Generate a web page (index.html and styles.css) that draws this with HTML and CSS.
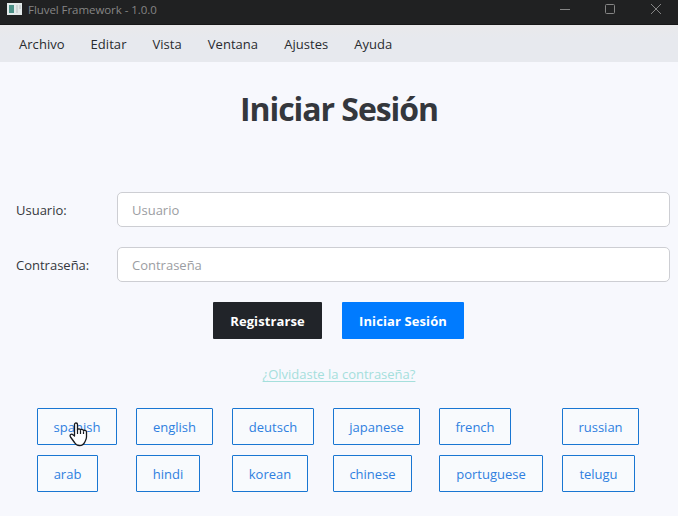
FILE: index.html
```html
<!DOCTYPE html>
<html lang="es">
<head>
<meta charset="utf-8">
<title>Fluvel Framework - 1.0.0</title>
<link rel="stylesheet" href="styles.css">
</head>
<body>
<header class="titlebar">
  <svg class="app-icon" width="15" height="12" viewBox="0 0 15 12"><path fill="#e2e9e9" d="M0 0h15v12H0z"/><path fill="#4c9187" d="M2 2h5v8H2z"/><path fill="#cdd3d4" d="M9 2h2v8H9zM12 2h2v4h-2z"/></svg>
  <span class="app-title">Fluvel Framework - 1.0.0</span>
  <svg class="window-controls" width="118" height="24" viewBox="0 0 118 24" fill="none" stroke="#858585"><path d="M0 9.500h10"/><rect x="45.500" y="4.500" width="9" height="9" rx="1"/><path d="M91 4l10 10M101 4L91 14"/></svg>
</header>
<nav class="menubar">
  <span>Archivo</span><span>Editar</span><span>Vista</span><span>Ventana</span><span>Ajustes</span><span>Ayuda</span>
</nav>
<main>
  <h1>Iniciar Sesión</h1>
  <form class="login">
    <label for="user">Usuario:</label><input id="user" type="text" placeholder="Usuario">
    <label for="pass">Contraseña:</label><input id="pass" type="password" placeholder="Contraseña">
  </form>
  <div class="actions">
    <button class="btn dark">Registrarse</button>
    <button class="btn primary">Iniciar Sesión</button>
  </div>
  <a class="forgot">¿Olvidaste la contraseña?</a>
  <div class="languages">
    <button class="lang w80">spanish
      <svg class="cursor" width="19" height="25" viewBox="0 0 19 25"><path fill="#fff" stroke="#17191e" stroke-width="1.300" stroke-linejoin="round" d="M5.500 14V2.500C5.500 .5 8.500 .5 8.500 2.500V8c0-1.500 3-1.500 3 .2 .2-1.300 3-1.200 3 .8 .3-1.200 3-.9 3 1V15c0 2-.8 3.200-1.700 5-1 2.500-2.600 3.500-5.300 3.500-2.500 0-4-1.200-5-3L1.500 15c-1.200-2 .8-3.700 2.500-2.200z"/><path fill="none" stroke="#17191e" stroke-width="1.200" d="M8.500 7.500V12M11.500 8.500V12M14.500 9.500V12"/></svg>
    </button>
    <button class="lang w77">english</button>
    <button class="lang w82">deutsch</button>
    <button class="lang w87">japanese</button>
    <button class="lang w72">french</button>
    <button class="lang w77">russian</button>
    <button class="lang w61">arab</button>
    <button class="lang w64">hindi</button>
    <button class="lang w76">korean</button>
    <button class="lang w79">chinese</button>
    <button class="lang w104">portuguese</button>
    <button class="lang w73">telugu</button>
  </div>
</main>
</body>
</html>
```
FILE: styles.css
```css
* { box-sizing: border-box; }
body {
  margin: 0;
  height: 516px;
  overflow: hidden;
  background: #f7f8fd;
  color: #34373c;
  font: 13px/18px "Open Sans", "Noto Sans", sans-serif;
}
.titlebar {
  display: flex;
  align-items: flex-start;
  height: 25px;
  padding-left: 7px;
  background: #202122;
  border-bottom: 1px solid #171718;
}
.app-icon { margin-top: 3px; }
.app-title { margin: 1px 0 0 6px; color: #858585; font-size: 11.500px; letter-spacing: -.06px; }
.window-controls { margin-left: auto; }
.menubar {
  display: flex;
  gap: 26px;
  height: 37px;
  padding: 10px 19px;
  background: linear-gradient(#e9e9eb, #e7e9ee 35%);
  color: #292b2f;
  letter-spacing: .04px;
}
main { display: flex; flex-direction: column; }
h1 {
  margin: 25px 0 0;
  height: 43px;
  font-size: 32px;
  line-height: 43px;
  font-weight: 700;
  text-align: center;
  letter-spacing: -1.050px;
}
.login {
  display: grid;
  grid-template-columns: 101px 553px;
  grid-auto-rows: 35px;
  row-gap: 20px;
  align-items: center;
  margin: 62px 0 0 16px;
}
input {
  height: 35px;
  padding: 0 14px;
  border: 1px solid #cdced3;
  border-radius: 5px;
  background: #fff;
  font: inherit;
}
input::placeholder { color: #9b9da2; opacity: 1; }
.actions { display: flex; gap: 20px; margin: 20px 0 0 213px; }
button { padding: 0; font: inherit; height: 37px; white-space: nowrap; }
.btn { border: 0; border-radius: 1px; color: #fff; font-weight: 700; letter-spacing: .1px; }
.dark { width: 109px; background: #212429; }
.primary { width: 122px; background: #007bff; }
.forgot {
  align-self: center;
  margin-top: 26px;
  color: #a5dfdc;
  text-decoration: underline;
  text-underline-offset: 2px;
}
.languages {
  display: grid;
  grid-template-columns: repeat(6, max-content);
  gap: 10px 19px;
  margin: 25px 0 0 37px;
}
.lang {
  position: relative;
  border: 1px solid #1976d2;
  border-radius: 1px;
  background: #f8fafd;
  color: #2f7fe0;
}
.cursor { position: absolute; left: 31px; top: 13px; }
.w61 { width: 61px; }
.w64 { width: 64px; }
.w72 { width: 72px; }
.w73 { width: 73px; }
.w76 { width: 76px; }
.w77 { width: 77px; }
.w79 { width: 79px; }
.w80 { width: 80px; }
.w82 { width: 82px; }
.w87 { width: 87px; }
.w104 { width: 104px; }
```
